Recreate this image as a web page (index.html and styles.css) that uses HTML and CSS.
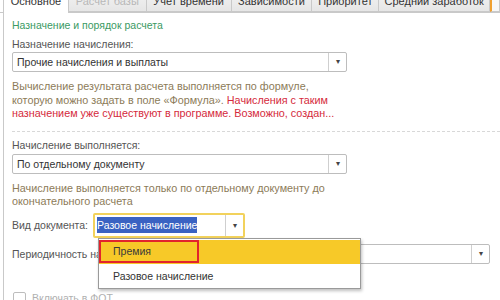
FILE: index.html
```html
<!DOCTYPE html>
<html lang="ru">
<head>
    <meta charset="UTF-8" />
    <title>Начисление</title>
    <link rel="stylesheet" href="styles.css">
</head>
<body>
    <div class="tabs">
        <div class="tab active">Основное</div>
        <div class="tab disabled">Расчет базы</div>
        <div class="tab">Учет времени</div>
        <div class="tab">Зависимости</div>
        <div class="tab">Приоритет</div>
        <div class="tab">Средний заработок</div>
        <div class="tab extra"></div>
    </div>

    <div class="panel">
        <div class="group-title">Назначение и порядок расчета</div>
        <div class="label">Назначение начисления:</div>
        <div class="select wide">
            <span class="value">Прочие начисления и выплаты</span>
            <span class="arrow">▾</span>
        </div>
        <p class="note">
            Вычисление результата расчета выполняется по формуле,<br>
            которую можно задать в поле «Формула». <span class="warn">Начисления с таким<br>
            назначением уже существуют в программе. Возможно, создан...</span>
        </p>

        <div class="separator"></div>

        <div class="label">Начисление выполняется:</div>
        <div class="select wide">
            <span class="value">По отдельному документу</span>
            <span class="arrow">▾</span>
        </div>
        <p class="note">
            Начисление выполняется только по отдельному документу до<br>
            окончательного расчета
        </p>

        <div class="row doc-row">
            <span class="label inline">Вид документа:</span>
            <div class="select focused">
                <span class="value"><span class="selected-text">Разовое начисление</span></span>
                <span class="arrow">▾</span>
            </div>
        </div>

        <div class="row period-row">
            <span class="label inline">Периодичность начисления:</span>
            <div class="select period">
                <span class="value"></span>
                <span class="arrow">▾</span>
            </div>
            <ul class="dropdown">
                <li class="current"><span class="marked">Премия</span></li>
                <li>Разовое начисление</li>
            </ul>
        </div>

        <label class="check">
            <span class="box"></span>
            Включать в ФОТ
        </label>
    </div>
</body>
</html>
```

FILE: styles.css
```css
body {
    margin: 0;
    font-family: "Liberation Sans", Arial, sans-serif;
    font-size: 10.5px;
    color: #4d4d4d;
    background: #fff;
    width: 500px;
    height: 300px;
    overflow: hidden;
}
.tabs {
    display: flex;
    margin-top: -10px;
    padding-left: 3px;
    height: 22px;
    border-bottom: 1px solid #c9c9c9;
}
.tab {
    box-sizing: border-box;
    line-height: 21px;
    font-size: 11px;
    text-align: center;
    color: #333;
    background: linear-gradient(#f3f3f3, #e6e6e6);
    border: 1px solid #c9c9c9;
    border-left: none;
    height: 22px;
    white-space: nowrap;
    overflow: hidden;
}
.tab.active {
    background: #fff;
    border-left: 1px solid #c9c9c9;
    height: 23px;
    border-bottom: none;
    width: 66px;
}
.tab.disabled { color: #b8b8b8; }
.tab:nth-child(2) { width: 78px; }
.tab:nth-child(3) { width: 85px; }
.tab:nth-child(4) { width: 81px; }
.tab:nth-child(5) { width: 67px; }
.tab:nth-child(6) { width: 111px; }
.tab.extra {
    width: 10px;
    border-left: 2px solid #f0a030;
    background: #f7f7f7;
}
.panel {
    box-sizing: border-box;
    margin-left: 3px;
    border-left: 1px solid #c9c9c9;
    padding: 5px 0 0 8px;
    height: 288px;
    overflow: hidden;
}
.group-title {
    color: #3a9a63;
    line-height: 14px;
}
.label {
    line-height: 14px;
    margin-top: 5px;
    color: #555;
}
.label.inline { margin-top: 0; }
.select {
    box-sizing: border-box;
    display: flex;
    height: 20px;
    border: 1px solid #bdbdbd;
    border-radius: 2px;
    background: #fff;
    margin-top: 1px;
}
.select.wide { width: 335px; }
.select .value {
    flex: 1;
    padding-left: 4px;
    line-height: 18px;
    color: #333;
    white-space: nowrap;
}
.select .arrow {
    width: 17px;
    border-left: 1px solid #cfcfcf;
    font-size: 8px;
    line-height: 18px;
    text-align: center;
    color: #444;
}
.note {
    margin: 8px 0 0;
    font-size: 10.8px;
    line-height: 13.5px;
    color: #8c7b58;
}
.warn { color: #d52a3c; }
.separator {
    margin: 10px 0 0;
    border-top: 1px dashed #d8d8d8;
    height: 0;
}
.separator + .label { margin-top: 6px; }
.separator + .label + .select { margin-top: 2px; }
.row {
    display: flex;
    align-items: center;
    position: relative;
}
.doc-row { margin-top: 4px; }
.doc-row .label { width: 81px; }
.select.focused {
    width: 152px;
    height: 25px;
    border: 2px solid #f2d25c;
    margin-top: 0;
}
.select.focused .value { line-height: 21px; padding-left: 2px; }
.select.focused .arrow { line-height: 21px; }
.selected-text {
    background: #3a62c2;
    color: #fff;
    padding: 2px 0;
}
.period-row {
    margin-top: 6px;
    height: 20px;
}
.period-row .label { white-space: nowrap; }
.select.period {
    position: absolute;
    left: 347px;
    top: 0;
    width: 131px;
    margin: 0;
}
.dropdown {
    position: absolute;
    left: 86px;
    top: -6px;
    width: 261px;
    margin: 0;
    padding: 1px 0 0;
    list-style: none;
    background: #fff;
    border: 1px solid #9a9a9a;
    box-shadow: 1px 2px 3px rgba(0, 0, 0, 0.25);
}
.dropdown li {
    height: 24px;
    line-height: 24px;
    padding-left: 14px;
    color: #333;
}
.dropdown li.current {
    background: #f7c928;
    padding-left: 0;
}
.marked {
    display: block;
    box-sizing: border-box;
    width: 100px;
    height: 23px;
    border: 2px solid #e2242c;
    padding-left: 12px;
    line-height: 19px;
    color: #3a3a3a;
}
.check {
    display: flex;
    align-items: center;
    margin-top: 28px;
    color: #b0b0b0;
}
.check .box {
    width: 11px;
    height: 11px;
    border: 1px solid #bdbdbd;
    border-radius: 2px;
    margin: 0 6px 0 1px;
}
```
